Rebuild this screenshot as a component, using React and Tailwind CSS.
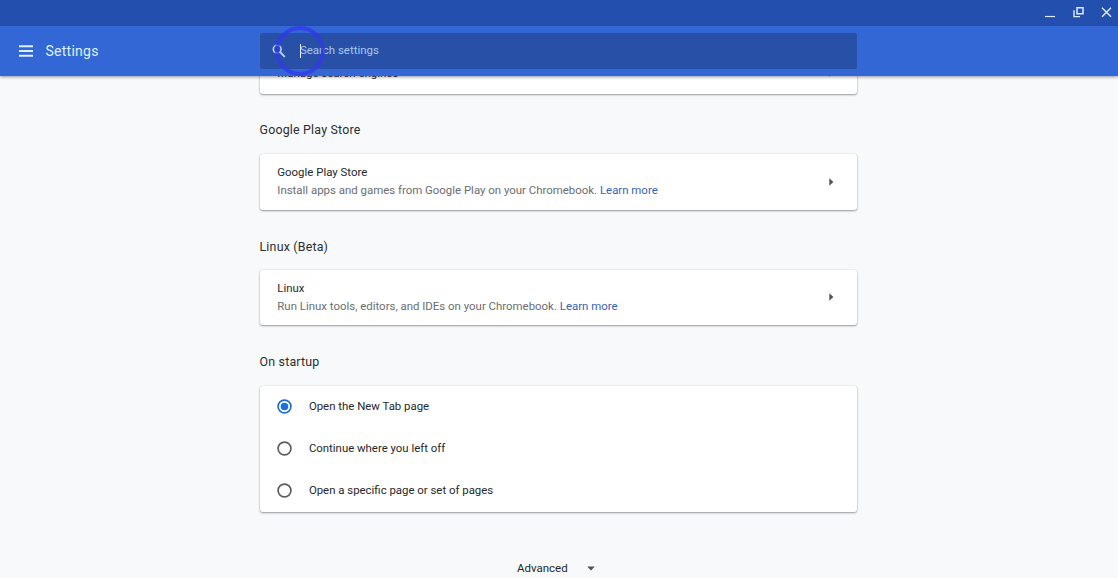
import React from "react";

const cardShadow = "bg-white rounded-[3px] shadow-[0_1px_2px_rgba(60,64,67,0.5),0_0_2px_rgba(60,64,67,0.12)]";

function Arrow() {
  return (
    <svg className="mr-[23.5px] mb-[1px] h-[8px] w-[5px] shrink-0" viewBox="0 0 5 8">
      <path d="M0.3 0.3 4.4 4 0.3 7.7z" fill="#505357" />
    </svg>
  );
}

function Heading({ children }) {
  return <h2 className="h-[20px] text-[12.4px] leading-[20px] tracking-[0.2px] whitespace-nowrap text-[#2b2e32]">{children}</h2>;
}

function LinkCard({ title, text, className, textClassName = "" }) {
  return (
    <div className={`${cardShadow} flex items-center justify-between pl-[17.8px] ${className}`}>
      <div className={`whitespace-nowrap text-[11.43px] ${textClassName}`}>
        <div className="text-[#25282c]">{title}</div>
        <div className="text-[#6a6e73]">
          {text} <a className="text-[#3563b8]">Learn more</a>
        </div>
      </div>
      <Arrow />
    </div>
  );
}

function Radio({ label, checked }) {
  return (
    <label className="flex h-[42px] items-center gap-[17.4px] pl-[17px]">
      <svg className="h-[15px] w-[15px]" viewBox="0 0 15 15">
        <circle cx="7.5" cy="7.5" r="6.4" fill="none" stroke={checked ? "#1f6fd6" : "#5b5e62"} strokeWidth="1.7" />
        {checked && <circle cx="7.5" cy="7.5" r="3.8" fill="#1f6fd6" />}
      </svg>
      <span className="whitespace-nowrap text-[11.4px] leading-[18px] text-[#25282c]">{label}</span>
    </label>
  );
}

export default function App() {
  return (
    <div className="flex h-[581px] w-[1118px] flex-col overflow-hidden bg-white font-[Roboto,sans-serif]">
      <div className="flex h-[26px] shrink-0 items-center justify-end bg-[#234fae] pr-[6px]">
        <svg className="h-[14px] w-[68px]" viewBox="0 0 68 14" fill="none" stroke="#dcebff">
          <path d="M1 10.5h10" strokeWidth="1.2" />
          <path d="M33 1.8h6v6h-6z" strokeWidth="1.5" />
          <path d="M30 4.2v6.4h6" strokeWidth="1.4" />
          <path d="M58 1.8l9 9M67 1.8l-9 9" strokeWidth="1.5" />
        </svg>
      </div>
      <header className="relative z-10 flex h-[50px] shrink-0 items-center bg-[#3367d6] shadow-[0_1px_3px_rgba(40,50,80,0.5)]">
        <div className="flex w-[259.5px] shrink-0 items-center pl-[19px]">
          <svg className="h-[12px] w-[14px]" viewBox="0 0 14 12">
            <path d="M0 1.2h14M0 6h14M0 10.8h14" stroke="#dcf0ff" strokeWidth="1.9" />
          </svg>
          <h1 className="ml-[12.5px] text-[14px] leading-[20px] tracking-[0.25px] text-[#dcf0ff]">Settings</h1>
        </div>
        <div className="flex h-[36px] w-[597.5px] items-center rounded-[2px] bg-[#2850a7] pl-[12.5px]">
          <svg className="h-[14px] w-[14px]" viewBox="0 0 14 14" fill="none" stroke="#bdd3f6">
            <circle cx="5.2" cy="5.2" r="3.9" strokeWidth="1.6" />
            <path d="M8.2 8.2l4.6 4.6" strokeWidth="1.9" />
          </svg>
          <span className="ml-[14px] h-[14px] w-px bg-[#e4f0ff]" />
          <span className="-ml-[1px] pb-[2px] text-[11.45px] leading-[18px] text-[#a9c6ef]">Search settings</span>
        </div>
        <div className="absolute top-0 left-[275px] h-[50px] w-[50px] rounded-full border-4 border-[#3137ec]/75 blur-[0.7px]" />
      </header>
      <main className="flex h-[502px] shrink-0 flex-col overflow-hidden bg-[#f8f9fb] pl-[259.5px]">
        <div className="flex w-[597.5px] flex-col">
          <div className={`${cardShadow} -mt-[22px] flex h-[40px] shrink-0 items-start justify-between pt-[10px] pl-[17.8px]`}>
            <span className="text-[11.45px] leading-[18px] text-[#25282c]">Manage search engines</span>
            <div className="pt-[5px]"><Arrow /></div>
          </div>
          <div className="h-[26px]" />
          <Heading>Google Play Store</Heading>
          <LinkCard className="mt-[14px] h-[56px]" textClassName="leading-[18px] pb-[2px]" title="Google Play Store" text="Install apps and games from Google Play on your Chromebook." />
          <div className="h-[27px]" />
          <Heading>Linux (Beta)</Heading>
          <LinkCard className="mt-[13px] h-[55px]" textClassName="leading-[17.5px]" title="Linux" text="Run Linux tools, editors, and IDEs on your Chromebook." />
          <div className="h-[27px]" />
          <Heading>On startup</Heading>
          <div className={`${cardShadow} mt-[14px] h-[126px]`}>
            <div className="-mt-[1px]">
              <Radio label="Open the New Tab page" checked />
              <Radio label="Continue where you left off" />
              <Radio label="Open a specific page or set of pages" />
            </div>
          </div>
          <div className="mt-[46px] flex items-center pl-[257.5px]">
            <span className="text-[11.5px] leading-[20px] text-[#25282c]">Advanced</span>
            <svg className="ml-[19px] h-[5px] w-[8px]" viewBox="0 0 8 5">
              <path d="M0.2 0.5h7.6L4 4.5z" fill="#505357" />
            </svg>
          </div>
        </div>
      </main>
    </div>
  );
}
